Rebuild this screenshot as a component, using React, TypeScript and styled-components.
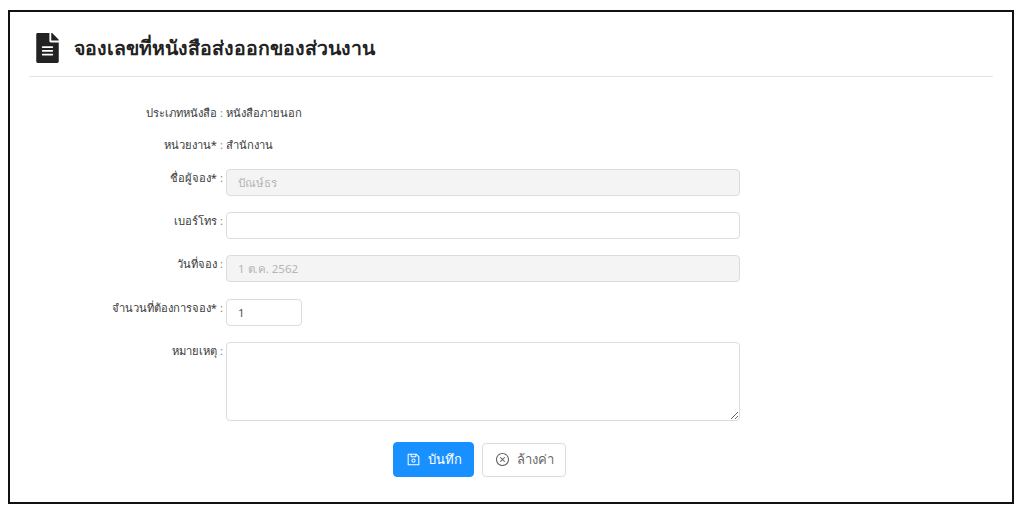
import styled, { createGlobalStyle } from "styled-components";
import { FaFileAlt } from "react-icons/fa";
import { AiOutlineCloseCircle, AiOutlineSave } from "react-icons/ai";

const GlobalStyle = createGlobalStyle`
  html, body {
    margin: 0;
    background: #fff;
  }
  body {
    font-family: "Noto Sans", "Liberation Sans", sans-serif;
    color: #333;
  }
`;

const Frame = styled.div`
  box-sizing: border-box;
  width: 1006px;
  height: 494px;
  margin: 10px 0 0 8px;
  border: 2px solid #111;
  padding: 0 19px;
`;

const Header = styled.div`
  display: flex;
  align-items: center;
  gap: 15px;
  box-sizing: border-box;
  height: 65px;
  padding: 8px 0 0 7px;
  border-bottom: 1px solid #e3e3e3;
  svg {
    width: 23px;
    height: 30px;
    color: #222;
  }
`;

const Title = styled.h1`
  margin: 0;
  font-size: 19.5px;
  font-weight: 600;
  color: #222;
`;

const Form = styled.div`
  display: flex;
  flex-direction: column;
  margin-top: 27px;
`;

const Row = styled.div<{ $height: number; $gap: number }>`
  display: flex;
  align-items: flex-start;
  height: ${(p) => p.$height}px;
  margin-bottom: ${(p) => p.$gap}px;
`;

const Label = styled.div`
  display: flex;
  justify-content: flex-end;
  gap: 3px;
  flex: 0 0 196px;
  font-size: 11.2px;
  line-height: 18px;
  color: #3c3c3c;
`;

const Colon = styled.span`
  color: #888;
  width: 5px;
`;

const Value = styled.div`
  margin-left: 1px;
  font-size: 11.2px;
  line-height: 18px;
  color: #3c3c3c;
`;

const Input = styled.input<{ $width?: number }>`
  box-sizing: border-box;
  width: ${(p) => p.$width ?? 514}px;
  height: 27px;
  margin-left: 1px;
  padding: 0 11px;
  border: 1px solid #dcdcdc;
  border-radius: 4px;
  font: inherit;
  font-size: 11.5px;
  color: #555;
  background: #fff;
  &:disabled {
    background: #f4f4f4;
    color: #b5b5b5;
  }
`;

const TextArea = styled.textarea`
  box-sizing: border-box;
  display: block;
  width: 514px;
  height: 79px;
  margin-left: 1px;
  border: 1px solid #dcdcdc;
  border-radius: 4px;
  background: #fff;
`;

const Actions = styled.div`
  display: flex;
  align-items: center;
  gap: 8px;
  margin-left: 364px;
`;

const Button = styled.button<{ $primary?: boolean }>`
  display: flex;
  align-items: center;
  justify-content: center;
  gap: 7px;
  box-sizing: border-box;
  height: ${(p) => (p.$primary ? 35 : 34)}px;
  width: ${(p) => (p.$primary ? 81 : 84)}px;
  padding: 0;
  border: 1px solid ${(p) => (p.$primary ? "#1890ff" : "#dcdcdc")};
  border-radius: 4px;
  background: ${(p) => (p.$primary ? "#1890ff" : "#fff")};
  color: ${(p) => (p.$primary ? "#fff" : "#666")};
  font: inherit;
  font-size: 13px;
  svg {
    width: 15px;
    height: 15px;
  }
`;

export default function App() {
  return (
    <>
      <GlobalStyle />
      <Frame>
        <Header>
          <FaFileAlt />
          <Title>จองเลขที่หนังสือส่งออกของส่วนงาน</Title>
        </Header>
        <Form>
          <Row $height={18} $gap={14}>
            <Label>ประเภทหนังสือ<Colon>:</Colon></Label>
            <Value>หนังสือภายนอก</Value>
          </Row>
          <Row $height={18} $gap={15}>
            <Label>หน่วยงาน*<Colon>:</Colon></Label>
            <Value>สำนักงาน</Value>
          </Row>
          <Row $height={27} $gap={16}>
            <Label>ชื่อผู้จอง*<Colon>:</Colon></Label>
            <Input disabled value="ปัณษ์ธร" readOnly />
          </Row>
          <Row $height={27} $gap={16}>
            <Label>เบอร์โทร<Colon>:</Colon></Label>
            <Input />
          </Row>
          <Row $height={27} $gap={17}>
            <Label>วันที่จอง<Colon>:</Colon></Label>
            <Input disabled value="1 ต.ค. 2562" readOnly />
          </Row>
          <Row $height={27} $gap={16}>
            <Label>จำนวนที่ต้องการจอง*<Colon>:</Colon></Label>
            <Input $width={76} value="1" readOnly />
          </Row>
          <Row $height={79} $gap={21}>
            <Label>หมายเหตุ<Colon>:</Colon></Label>
            <TextArea />
          </Row>
          <Actions>
            <Button $primary><AiOutlineSave />บันทึก</Button>
            <Button><AiOutlineCloseCircle />ล้างค่า</Button>
          </Actions>
        </Form>
      </Frame>
    </>
  );
}
